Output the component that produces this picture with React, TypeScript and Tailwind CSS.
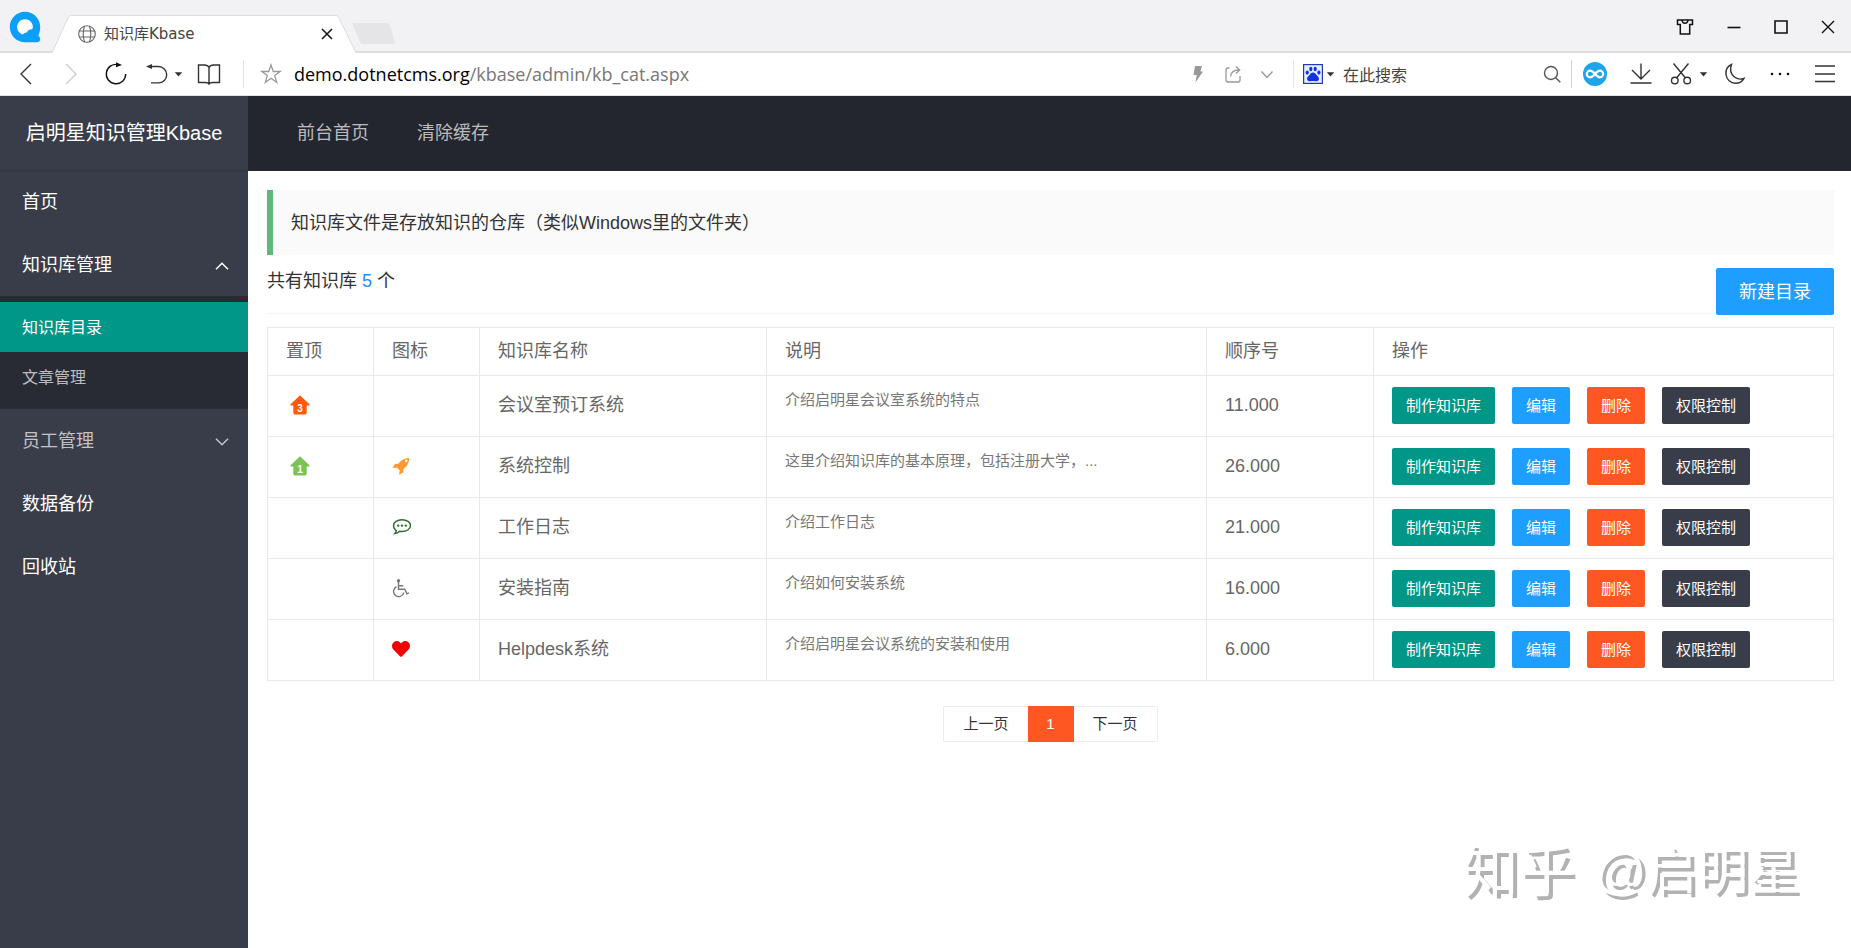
import { useState } from "react";
import type { ReactNode } from "react";
import { FaHeart } from "react-icons/fa";

type Row = {
  id: number;
  pin?: { label: string; color: string };
  icon?: ReactNode;
  name: string;
  desc: string;
  order: string;
};

function HomeBadge({ label, color }: { label: string; color: string }) {
  return (
    <svg viewBox="0 0 20 20" className={`ml-1 h-5 w-5 ${color}`} role="img" aria-label={label}>
      <path
        d="M10 .3 19.4 9.2c.5.6.3 1.200-.4 1.200h-2.300v7c0 1.400-.7 2-2 2H5.300c-1.300 0-2-.6-2-2v-7H1c-.7 0-.9-.6-.4-1.200z"
        fill="currentColor"
      />
      <text x="10" y="16.500" textAnchor="middle" fontSize="10" fontWeight="700" fill="#fff" fontFamily="Liberation Sans, sans-serif">
        {label}
      </text>
    </svg>
  );
}

function RocketIcon() {
  return (
    <svg viewBox="0 0 18 18" className="h-[18px] w-[18px] text-[#ff9a33]">
      <path
        fillRule="evenodd"
        d="M17 .9c.3 3.600-.7 6.300-3.400 9l-2.100 2-.2 3.200c0 .2-.1.300-.3.400l-3.200 1.900c-.4.2-.8-.1-.7-.5l.7-3.300-3.200-3.200-3.300.7c-.4.1-.7-.3-.5-.7L2.700 7.200c.1-.2.2-.3.400-.3l3.200-.2 2-2.100C11 1.900 13.400.8 17 .9zM14.200 2.600a1.300 1.300 0 1 0 0 2.600 1.300 1.300 0 0 0 0-2.600z"
        fill="currentColor"
      />
    </svg>
  );
}

function CommentIcon() {
  return (
    <svg viewBox="0 0 20 18" className="h-[18px] w-5 text-[#2b6e2b]" fill="none" stroke="currentColor" strokeWidth="1.400">
      <path d="M10 1.700c4.800 0 8.500 2.600 8.500 5.900s-3.700 5.900-8.500 5.900c-.8 0-1.600-.1-2.400-.2-1.200 1.200-2.700 2-4.700 2.300.8-.8 1.300-1.700 1.400-3C2.600 11.500 1.500 9.600 1.500 7.600c0-3.300 3.700-5.900 8.500-5.900z" />
      <g fill="currentColor" stroke="none">
        <circle cx="6.200" cy="7.600" r="1.200" />
        <circle cx="10" cy="7.600" r="1.200" />
        <circle cx="13.800" cy="7.600" r="1.200" />
      </g>
    </svg>
  );
}

function WheelchairIcon() {
  return (
    <svg viewBox="0 0 18 20" className="h-5 w-[18px] text-[#777]" fill="none" stroke="currentColor" strokeWidth="1.400">
      <circle cx="6.500" cy="2.800" r="1.700" fill="currentColor" stroke="none" />
      <path d="M6.500 4v7.200h6.200l2.300 4.600 2-.9M6.500 7.800h4.800" />
      <path d="M4.600 8.700a5.200 5.200 0 1 0 7.200 6" />
    </svg>
  );
}

const rows: Row[] = [
  { id: 1, pin: { label: "3", color: "text-[#ff5a0a]" }, name: "会议室预订系统", desc: "介绍启明星会议室系统的特点", order: "11.000" },
  {
    id: 2,
    pin: { label: "1", color: "text-[#7cc355]" },
    icon: <RocketIcon />,
    name: "系统控制",
    desc: "这里介绍知识库的基本原理，包括注册大学，...",
    order: "26.000",
  },
  { id: 3, icon: <CommentIcon />, name: "工作日志", desc: "介绍工作日志", order: "21.000" },
  { id: 4, icon: <WheelchairIcon />, name: "安装指南", desc: "介绍如何安装系统", order: "16.000" },
  { id: 5, icon: <FaHeart className="h-[18px] w-[18px] text-[#f40000]" />, name: "Helpdesk系统", desc: "介绍启明星会议系统的安装和使用", order: "6.000" },
];

const columns = [
  { title: "置顶", width: "w-[106px]" },
  { title: "图标", width: "w-[106px]" },
  { title: "知识库名称", width: "w-[287px]" },
  { title: "说明", width: "w-[440px]" },
  { title: "顺序号", width: "w-[167px]" },
  { title: "操作", width: "w-auto" },
];

const actions = [
  { label: "制作知识库", color: "bg-[#009688]" },
  { label: "编辑", color: "bg-[#1e9fff]" },
  { label: "删除", color: "bg-[#ff5722]" },
  { label: "权限控制", color: "bg-[#393d49]" },
];

function Glyph({ children, className = "" }: { children: ReactNode; className?: string }) {
  return (
    <svg viewBox="0 0 24 24" className={`h-6 w-6 shrink-0 ${className}`} fill="none" stroke="currentColor" strokeWidth="1.400">
      {children}
    </svg>
  );
}

function IconButton({ label, children, className = "" }: { label: string; children: ReactNode; className?: string }) {
  return (
    <button type="button" aria-label={label} className={`shrink-0 ${className}`}>
      {children}
    </button>
  );
}

function Caret() {
  return (
    <svg viewBox="0 0 9 5" className="h-[5px] w-[9px]" fill="#333">
      <path d="M.8.3h7.400L4.500 4.500z" />
    </svg>
  );
}

function TabStrip() {
  return (
    <div className="flex h-[53px] items-stretch border-b-2 border-[#dedee0] bg-[#f2f2f4]">
      <svg viewBox="0 0 32 32" className="ml-[9px] mt-[11px] h-8 w-8 shrink-0">
        <path
          d="M16 .8C7.600.8.800 7.500.800 16S7.600 31.200 16 31.200h12.400c2 0 3.200-1.800 2.700-3.600-.3-1.200-1-2.200-1.800-3 1.200-2.500 1.900-5.400 1.900-8.600C31.200 7.500 24.400.8 16 .8z"
          fill="#0c9ffa"
        />
        <path d="M16 8.200c-4.400 0-7.900 3.500-7.900 7.800 0 3.600 2.400 6.500 5.700 7.400 1.400-1.300 2.700-2 4.300-2.200.8-2 2.400-2.900 5-2.900.5-.9.800-1.600.8-2.300 0-4.300-3.500-7.800-7.900-7.800z" fill="#fff" />
      </svg>
      <div className="relative -mb-[2px] ml-[11px] flex w-[304px] shrink-0 items-center pl-[26px] pr-[23px] pt-[14px]">
        <svg viewBox="0 0 304 53" preserveAspectRatio="none" className="absolute inset-0 h-full w-full">
          <path d="M0 53 15.500 19c1-2.400 2-3.500 4-3.500h264c2 0 3 1.100 4 3.500L304 53z" fill="#fff" stroke="#dcdcde" strokeWidth="1" />
          <path d="M1 52.500h302" stroke="#fff" strokeWidth="2" />
        </svg>
        <svg viewBox="0 0 18 18" className="relative h-[18px] w-[18px] shrink-0" fill="none" stroke="#666" strokeWidth="1.100">
          <circle cx="9" cy="9" r="8.300" />
          <path d="M1 6h16M1 12h16M6.500 1c-1.600 5-1.600 11 0 16M11.500 1c1.600 5 1.600 11 0 16" />
        </svg>
        <span className="relative ml-2 flex-1 whitespace-nowrap font-['DejaVu_Sans','Noto_Sans_CJK_SC',sans-serif] text-[15px] leading-5 text-[#444]">
          知识库Kbase
        </span>
        <IconButton label="关闭标签页" className="relative">
          <svg viewBox="0 0 12 12" className="h-3 w-3" stroke="#111" strokeWidth="1.500">
            <path d="m1 1 10 10M11 1 1 11" />
          </svg>
        </IconButton>
      </div>
      <button type="button" aria-label="新标签页" className="-ml-1 mt-[23px] h-[21px] w-[43px] shrink-0">
        <svg viewBox="0 0 43 21" className="h-full w-full">
          <path d="M1.500 0h33.500c1.500 0 2.500.8 3 2l4.500 17c.3 1.200-.2 2-1.500 2H11c-1.500 0-2.500-.7-3-2L.5 2C.1.800.400 0 1.500 0z" fill="#e5e5e8" />
        </svg>
      </button>
      <div className="flex flex-1 items-center justify-end gap-[33px] pr-4 pt-0.5 text-[#111]">
        <IconButton label="皮肤">
          <svg viewBox="0 0 18 16" className="h-4 w-[18px]" fill="none" stroke="currentColor" strokeWidth="1.500">
            <path d="M1.500 1h15v4.500h-2.800V15H4.300V5.500H1.500z" />
            <path d="M6 1c.2 2 1.400 3.200 3 3.200S11.800 3 12 1" />
          </svg>
        </IconButton>
        <IconButton label="最小化">
          <svg viewBox="0 0 14 14" className="h-[14px] w-[14px]" stroke="currentColor" strokeWidth="1.600">
            <path d="M.5 7.500h13" />
          </svg>
        </IconButton>
        <IconButton label="最大化">
          <svg viewBox="0 0 14 14" className="h-[14px] w-[14px]" fill="none" stroke="currentColor" strokeWidth="1.600">
            <path d="M1 1h12v12H1z" />
          </svg>
        </IconButton>
        <IconButton label="关闭">
          <svg viewBox="0 0 14 14" className="h-[14px] w-[14px]" stroke="currentColor" strokeWidth="1.400">
            <path d="m1 1 12 12M13 1 1 13" />
          </svg>
        </IconButton>
      </div>
    </div>
  );
}

function Toolbar() {
  return (
    <div className="flex h-[43px] items-center border-b border-[#e2e2e2] bg-white pl-[14px] pr-[14px] text-[#333]">
      <IconButton label="后退">
        <Glyph>
          <path d="M17 2 7 12l10 10" />
        </Glyph>
      </IconButton>
      <IconButton label="前进" className="ml-[22px] text-[#ccc]">
        <Glyph>
          <path d="m6 2 10 10L6 22" />
        </Glyph>
      </IconButton>
      <IconButton label="刷新" className="ml-5 text-[#111]">
        <Glyph>
          <path d="M14.500 2.700a9.700 9.700 0 1 0 7.200 9.300" />
          <path d="M12 .2v5L18 2.900z" fill="currentColor" stroke="none" />
        </Glyph>
      </IconButton>
      <IconButton label="撤销" className="ml-4">
        <Glyph>
          <path d="M6 4.500h8.500a8.200 8.200 0 0 1 0 16.400H7" />
          <path d="M2 4.500 8 2v5z" fill="currentColor" stroke="none" />
        </Glyph>
      </IconButton>
      <IconButton label="最近关闭" className="ml-[6px]">
        <Caret />
      </IconButton>
      <IconButton label="收藏夹" className="ml-[14px]">
        <Glyph>
          <path d="M12 5.500C11 3.500 9.500 3 7.500 3H1.500v17.500h7c1.500 0 2.700.4 3.500 1.500.8-1.100 2-1.500 3.500-1.500h7V3h-6c-2 0-3.500.5-4.500 2.500zV22" />
        </Glyph>
      </IconButton>
      <span className="ml-[22px] h-7 w-px bg-[#e4e4e4]" />
      <IconButton label="收藏" className="ml-[15px] text-[#999]">
        <Glyph>
          <path d="m12 3 2.300 6.500h6.900l-5.500 4.100 2 6.700-5.700-4-5.700 4 2-6.700-5.500-4.100h6.900z" strokeWidth="1.300" />
        </Glyph>
      </IconButton>
      <div
        role="textbox"
        aria-label="地址栏"
        className="ml-[11px] flex-1 whitespace-nowrap font-['Open_Sans',sans-serif] text-[18px] leading-6 text-[#777]"
      >
        <span className="text-black">demo.dotnetcms.org</span>/kbase/admin/kb_cat.aspx
      </div>
      <IconButton label="极速模式" className="text-[#999]">
        <Glyph>
          <path d="M9 4h7l-1.500 5.500H17L9.500 20.500l1.200-7.500H7.500z" fill="currentColor" stroke="none" />
        </Glyph>
      </IconButton>
      <IconButton label="分享" className="ml-[11px] text-[#999]">
        <Glyph>
          <path d="M8.500 6H7a2 2 0 0 0-2 2v10a2 2 0 0 0 2 2h10a2 2 0 0 0 2-2v-4M9.500 14.500C10 10 12.500 8 18 8M15 4.500 18.700 8 15 11.500" strokeWidth="1.300" />
        </Glyph>
      </IconButton>
      <IconButton label="更多地址" className="ml-[10px] text-[#999]">
        <Glyph>
          <path d="m6.500 9.500 5.500 6 5.500-6" />
        </Glyph>
      </IconButton>
      <span className="ml-[14px] h-7 w-px bg-[#e4e4e4]" />
      <IconButton label="搜索引擎" className="ml-[9px] flex items-center gap-[3px]">
        <svg viewBox="0 0 20 20" className="h-5 w-5">
          <rect x=".6" y=".6" width="18.800" height="18.800" fill="#e6efff" stroke="#2439b0" strokeWidth="1.200" />
          <g fill="#1433e6">
            <ellipse cx="4.200" cy="8.600" rx="1.600" ry="2.100" />
            <ellipse cx="7.800" cy="5" rx="1.600" ry="2.200" />
            <ellipse cx="12.200" cy="5" rx="1.600" ry="2.200" />
            <ellipse cx="15.900" cy="8.600" rx="1.600" ry="2.100" />
            <path d="M10 8.600c1.700 0 2.600 1.400 3.800 2.700 1.300 1.300 2.400 2.200 2.100 4-.3 1.700-1.900 2.200-3.300 1.900-1.900-.4-3.300-.4-5.200 0-1.400.3-3-.2-3.300-1.900-.3-1.800.8-2.700 2.100-4 1.200-1.300 2.100-2.700 3.800-2.700z" />
          </g>
        </svg>
        <Caret />
      </IconButton>
      <input
        type="search"
        aria-label="搜索"
        placeholder="在此搜索"
        className="ml-2 w-[197px] shrink-0 bg-transparent font-['Noto_Sans_CJK_SC',sans-serif] text-base leading-6 outline-none placeholder:text-[#444]"
      />
      <IconButton label="开始搜索" className="text-[#555]">
        <Glyph>
          <circle cx="11" cy="11" r="6.500" />
          <path d="m15.700 15.700 4.600 4.600" />
        </Glyph>
      </IconButton>
      <span className="ml-[7px] h-7 w-px bg-[#d0d0d0]" />
      <IconButton label="扩展" className="ml-[11px]">
        <svg viewBox="0 0 24 24" className="h-6 w-6">
          <circle cx="12" cy="12" r="12" fill="#1ea4e9" />
          <path
            d="M12 12c-1.800-2.200-3-3.300-4.900-3.300a3.300 3.300 0 0 0 0 6.600c1.900 0 3.100-1.100 4.900-3.300s3-3.300 4.900-3.300a3.300 3.300 0 0 1 0 6.600c-1.900 0-3.100-1.100-4.900-3.300z"
            fill="none"
            stroke="#fff"
            strokeWidth="2.200"
          />
        </svg>
      </IconButton>
      <IconButton label="下载" className="ml-[22px]">
        <Glyph>
          <path d="M12 1.500v15.500M3 8l9 9 9-9M1.500 21h21" />
        </Glyph>
      </IconButton>
      <IconButton label="截图" className="ml-4">
        <Glyph>
          <path d="M4.500 1.500 16.500 16M19.500 1.500 7.500 16" />
          <circle cx="5.800" cy="18.500" r="3.300" />
          <circle cx="18.200" cy="18.500" r="3.300" />
        </Glyph>
      </IconButton>
      <IconButton label="截图选项" className="ml-[6px]">
        <Caret />
      </IconButton>
      <IconButton label="夜间模式" className="ml-[15px]">
        <Glyph>
          <path d="M8.500 2.500C4.500 4.300 2.500 8 3 12.500c.6 5 4.500 8.700 9.500 8.700 3.500 0 6.800-1.700 8.500-4.900-3.200 1.200-7.200.9-9.900-1.500C8 12 6.900 7 8.500 2.500z" />
        </Glyph>
      </IconButton>
      <IconButton label="更多" className="ml-[21px] text-[#111]">
        <Glyph>
          <g fill="currentColor" stroke="none">
            <circle cx="4" cy="12" r="1.300" />
            <circle cx="12" cy="12" r="1.300" />
            <circle cx="20" cy="12" r="1.300" />
          </g>
        </Glyph>
      </IconButton>
      <IconButton label="菜单" className="ml-[21px]">
        <Glyph>
          <path d="M2 4h20M2 12h20M2 19.500h20" />
        </Glyph>
      </IconButton>
    </div>
  );
}

function Chevron({ up }: { up?: boolean }) {
  return (
    <svg viewBox="0 0 14 8" className="h-2 w-[14px]" fill="none" stroke="currentColor" strokeWidth="1.500">
      <path d={up ? "m1 7.200 6-6 6 6" : "m1 .8 6 6 6-6"} />
    </svg>
  );
}

function Sidebar() {
  const [open, setOpen] = useState(true);
  const item = "flex h-[63px] w-full items-center justify-between pl-[22px] pr-[19px] pt-0.5 text-[18px]";
  const child = "flex h-[50px] items-center pl-[22px] pt-0.5 text-base";

  return (
    <aside className="w-[248px] shrink-0 bg-[#393d49] text-white">
      <div className="flex h-[74px] items-center justify-center whitespace-nowrap text-xl shadow-[0_1px_2px_rgba(0,0,0,0.15)]">
        启明星知识管理Kbase
      </div>
      <nav>
        <a href="#home" className={item}>
          首页
        </a>
        <button type="button" onClick={() => setOpen(!open)} aria-expanded={open} className={item}>
          知识库管理
          <Chevron up={open} />
        </button>
        {open && (
          <div className="bg-[#282b33] pb-[7px] pt-[6px]">
            <a href="#cat" className={`${child} bg-[#009688]`}>
              知识库目录
            </a>
            <a href="#article" className={`${child} text-white/70`}>
              文章管理
            </a>
          </div>
        )}
        <button type="button" className={`${item} text-white/70`}>
          员工管理
          <Chevron />
        </button>
        <a href="#backup" className={item}>
          数据备份
        </a>
        <a href="#recycle" className={item}>
          回收站
        </a>
      </nav>
    </aside>
  );
}

function KbTable() {
  const cell = "border border-[#e9e9e9] px-[18px] pb-0.5";

  return (
    <table className="w-full table-fixed border-collapse text-left text-[18px] leading-6 text-[#666]">
      <thead>
        <tr className="h-12">
          {columns.map((c) => (
            <th key={c.title} scope="col" className={`${cell} font-normal ${c.width}`}>
              {c.title}
            </th>
          ))}
        </tr>
      </thead>
      <tbody>
        {rows.map((r) => (
          <tr key={r.id} className="h-[61px]">
            <td className={cell}>{r.pin && <HomeBadge {...r.pin} />}</td>
            <td className={cell}>{r.icon}</td>
            <td className={cell}>{r.name}</td>
            <td className="border border-[#e9e9e9] px-[18px] pb-3 text-[15px] text-[#777]">{r.desc}</td>
            <td className={cell}>{r.order}</td>
            <td className={cell}>
              <div className="flex gap-[17px]">
                {actions.map((a) => (
                  <button key={a.label} type="button" className={`h-[37px] whitespace-nowrap rounded-xs px-[14px] pt-0.5 text-[15px] text-white ${a.color}`}>
                    {a.label}
                  </button>
                ))}
              </div>
            </td>
          </tr>
        ))}
      </tbody>
    </table>
  );
}

export default function App() {
  return (
    <div className="flex min-h-screen flex-col bg-white font-['Liberation_Sans','Noto_Sans_CJK_SC',sans-serif]">
      <TabStrip />
      <Toolbar />
      <div className="flex flex-1">
        <Sidebar />
        <div className="relative min-w-0 flex-1">
          <header className="flex h-[75px] items-center gap-12 bg-[#23262e] pl-[49px] text-[18px] text-white/70">
            <a href="#front">前台首页</a>
            <a href="#cache">清除缓存</a>
          </header>
          <main className="pb-10 pl-[19px] pr-[17px] pt-[19px] text-[18px] text-[#333]">
            <blockquote className="flex h-[65px] items-center border-l-[6px] border-[#5fb878] bg-[#fafafa] pl-[18px] pt-0.5">
              知识库文件是存放知识的仓库（类似Windows里的文件夹）
            </blockquote>
            <div className="mt-[13px] flex items-start justify-between">
              <p className="flex-1 border-b border-[#f6f6f6] pb-[19px] leading-[26px]">
                共有知识库 <span className="text-[#1e8fff]">5</span> 个
              </p>
              <button type="button" className="h-[47px] rounded-xs bg-[#1e9fff] px-[23px] pt-0.5 text-[18px] text-white">
                新建目录
              </button>
            </div>
            <div className="mt-3">
              <KbTable />
            </div>
            <nav aria-label="分页" className="mt-[25px] flex justify-center text-[15px]">
              <a href="#prev" className="flex h-9 items-center rounded-l-xs border border-r-0 border-[#ececec] px-[19px]">
                上一页
              </a>
              <span aria-current="page" className="flex h-9 w-[46px] items-center justify-center bg-[#ff5722] text-white">
                1
              </span>
              <a href="#next" className="flex h-9 items-center rounded-r-xs border border-l-0 border-[#ececec] px-[19px]">
                下一页
              </a>
            </nav>
          </main>
          <div className="absolute bottom-10 right-[52px] flex items-center gap-5 whitespace-nowrap text-white [text-shadow:4px_4px_0_#b2b2b2]">
            <span className="text-[56px] leading-[72px]">知乎</span>
            <span className="text-[51px] leading-[72px]">@启明星</span>
          </div>
        </div>
      </div>
    </div>
  );
}
